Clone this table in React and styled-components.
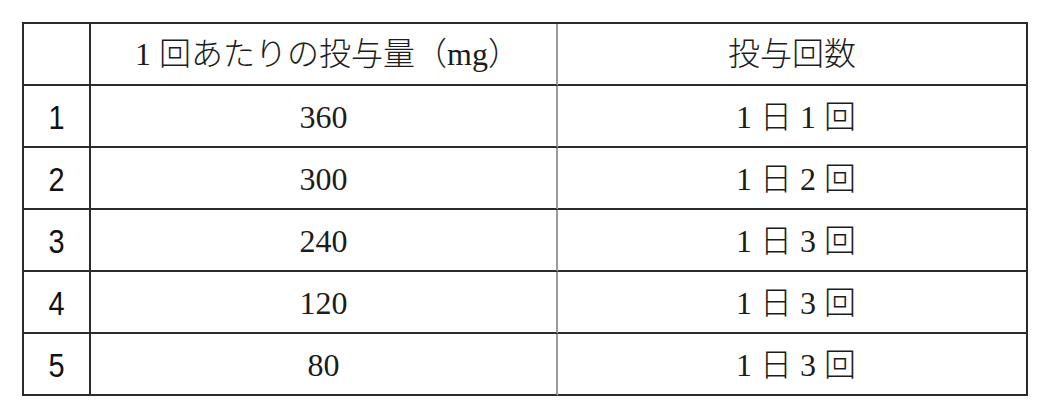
import React from 'react';
import styled, { createGlobalStyle } from 'styled-components';

const GlobalStyle = createGlobalStyle`
  body {
    margin: 0;
    background: #fff;
  }
`;

const Page = styled.main`
  padding: 22px 0 0 22px;
  width: 1051px;
  height: 417px;
  box-sizing: border-box;
  background: #fff;
`;

const Grid = styled.div`
  display: grid;
  grid-template-columns: 67px 467px 470px;
  grid-auto-rows: 62px;
  width: max-content;
  border-top: 2px solid #2b2b2b;
  border-left: 2px solid #2b2b2b;
`;

const Cell = styled.div`
  box-sizing: border-box;
  display: flex;
  align-items: center;
  justify-content: center;
  border-bottom: 2px solid #2b2b2b;
  border-right: 2px solid ${p => (p.$soft ? '#9a9a9a' : '#2b2b2b')};
  font-family: "Liberation Serif", "Noto Sans CJK JP", serif;
  font-size: 32px;
  font-weight: 300;
  color: #1c1c1c;
  line-height: 1;
  padding-top: ${p => (p.$head ? '0' : '2px')};
`;

const IndexCell = styled(Cell)`
  font-family: "Liberation Sans Narrow", "Liberation Sans", Roboto, sans-serif;
  font-size: 34px;
  font-weight: 400;
  color: #111;
  & > span {
    display: inline-block;
    transform: scaleX(0.85);
  }
`;

// full-width slot for a serif digit inside Japanese text
const Num = styled.span`
  display: inline-block;
  width: 1em;
  text-align: center;
  font-family: "Liberation Serif", serif;
`;

const rows = [
  { dose: '360', times: '1' },
  { dose: '300', times: '2' },
  { dose: '240', times: '3' },
  { dose: '120', times: '3' },
  { dose: '80', times: '3' },
];

export default function App() {
  return (
    <Page>
      <GlobalStyle />
      <Grid>
        <Cell $head />
        <Cell $head $soft>
          <Num>1</Num>回あたりの投与量（mg）
        </Cell>
        <Cell $head>投与回数</Cell>
        {rows.map((r, i) => (
          <React.Fragment key={i}>
            <IndexCell><span>{i + 1}</span></IndexCell>
            <Cell $soft>{r.dose}</Cell>
            <Cell>
              <Num>1</Num>日<Num>{r.times}</Num>回
            </Cell>
          </React.Fragment>
        ))}
      </Grid>
    </Page>
  );
}
